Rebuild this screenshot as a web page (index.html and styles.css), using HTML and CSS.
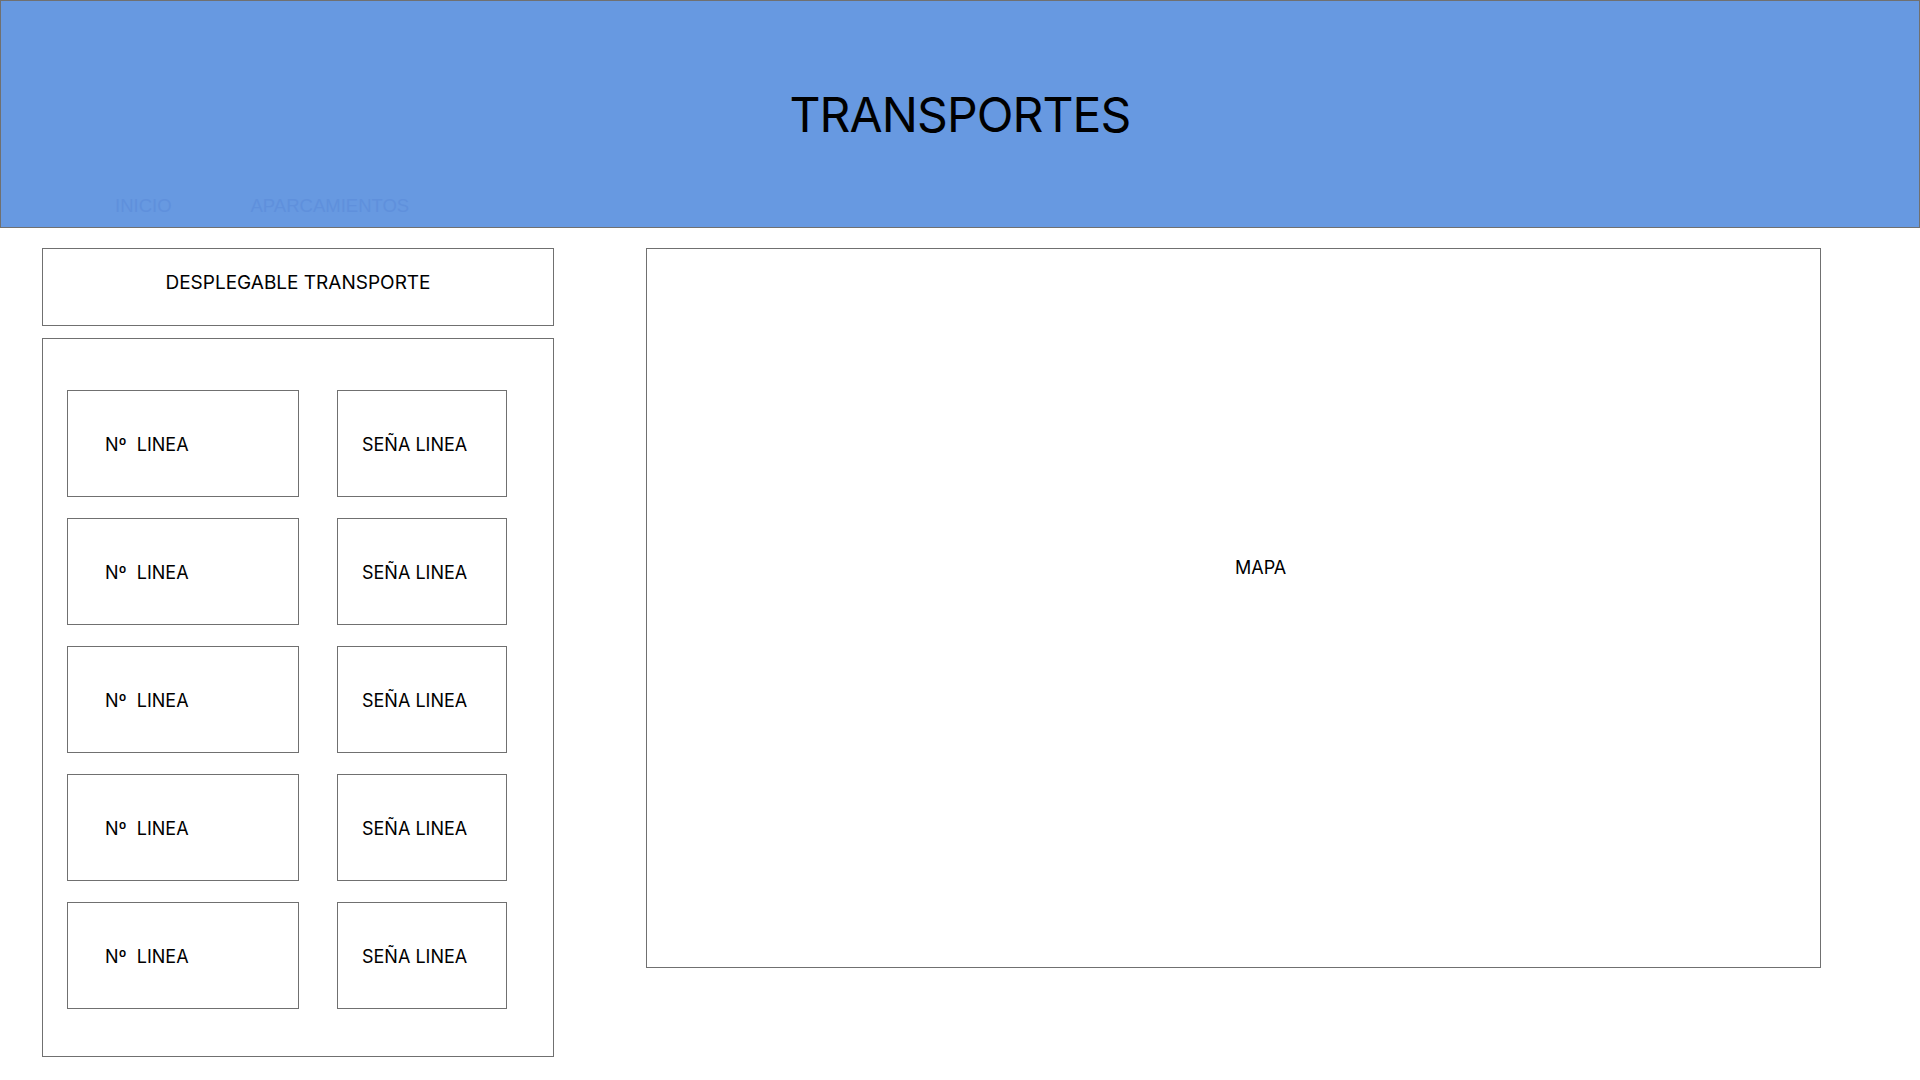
FILE: index.html
```html
<!DOCTYPE html>
<html lang="es">
<head>
<meta charset="utf-8">
<title>Transportes</title>
<link rel="stylesheet" href="styles.css">
</head>
<body>
<header class="header">
  <h1 class="title">TRANSPORTES</h1>
  <nav class="nav">
    <a class="nav-link">INICIO</a>
    <a class="nav-link">APARCAMIENTOS</a>
  </nav>
</header>
<main class="main">
  <section class="side">
    <div class="dropdown">DESPLEGABLE TRANSPORTE</div>
    <div class="lines">
      <div class="line-num">Nº&nbsp; LINEA</div><div class="line-sign">SEÑA LINEA</div>
      <div class="line-num">Nº&nbsp; LINEA</div><div class="line-sign">SEÑA LINEA</div>
      <div class="line-num">Nº&nbsp; LINEA</div><div class="line-sign">SEÑA LINEA</div>
      <div class="line-num">Nº&nbsp; LINEA</div><div class="line-sign">SEÑA LINEA</div>
      <div class="line-num">Nº&nbsp; LINEA</div><div class="line-sign">SEÑA LINEA</div>
    </div>
  </section>
  <section class="map">MAPA</section>
</main>
</body>
</html>
```

FILE: styles.css
```css
* { box-sizing: border-box; }
html, body { margin: 0; padding: 0; background: #ffffff; }
body { font-family: Inter, "Noto Sans", sans-serif; color: #000; width: 1920px; height: 1080px; overflow: hidden; }

.header {
  height: 228px;
  background: #6799e1;
  border: 1px solid #707070;
  position: relative;
  display: flex;
  justify-content: center;
  padding-top: 92px;
}
.title {
  margin: 0;
  font-size: 48px;
  font-weight: 400;
  line-height: 44px;
  height: 44px;
  letter-spacing: -0.9px;
}
.nav {
  position: absolute;
  left: 114px;
  top: 194px;
  display: flex;
  gap: 79px;
  font-family: "Liberation Sans", Arial, sans-serif;
  font-size: 18.5px;
}
.nav-link { color: #5f90dc; text-decoration: none; }

.main {
  display: flex;
  align-items: flex-start;
  padding: 20px 0 0 42px;
  gap: 92px;
}
.side { width: 512px; display: flex; flex-direction: column; gap: 12px; }
.dropdown {
  height: 78px;
  border: 1px solid #707070;
  text-align: center;
  font-size: 19px;
  padding-top: 23px;
  line-height: 22px;
}
.lines {
  border: 1px solid #707070;
  height: 719px;
  padding: 51px 0 0 24px;
  display: grid;
  grid-template-columns: 232px 170px;
  grid-auto-rows: 107px;
  column-gap: 38px;
  row-gap: 21px;
  font-size: 18px;
}
.line-num, .line-sign {
  border: 1px solid #707070;
  display: flex;
  align-items: center;
  padding-top: 2px;
}
.line-num { padding-left: 37px; }
.line-sign { padding-left: 24px; }
.map {
  width: 1175px;
  height: 720px;
  border: 1px solid #707070;
  font-size: 18px;
  padding: 308px 0 0 588px;
  line-height: 22px;
}
```
